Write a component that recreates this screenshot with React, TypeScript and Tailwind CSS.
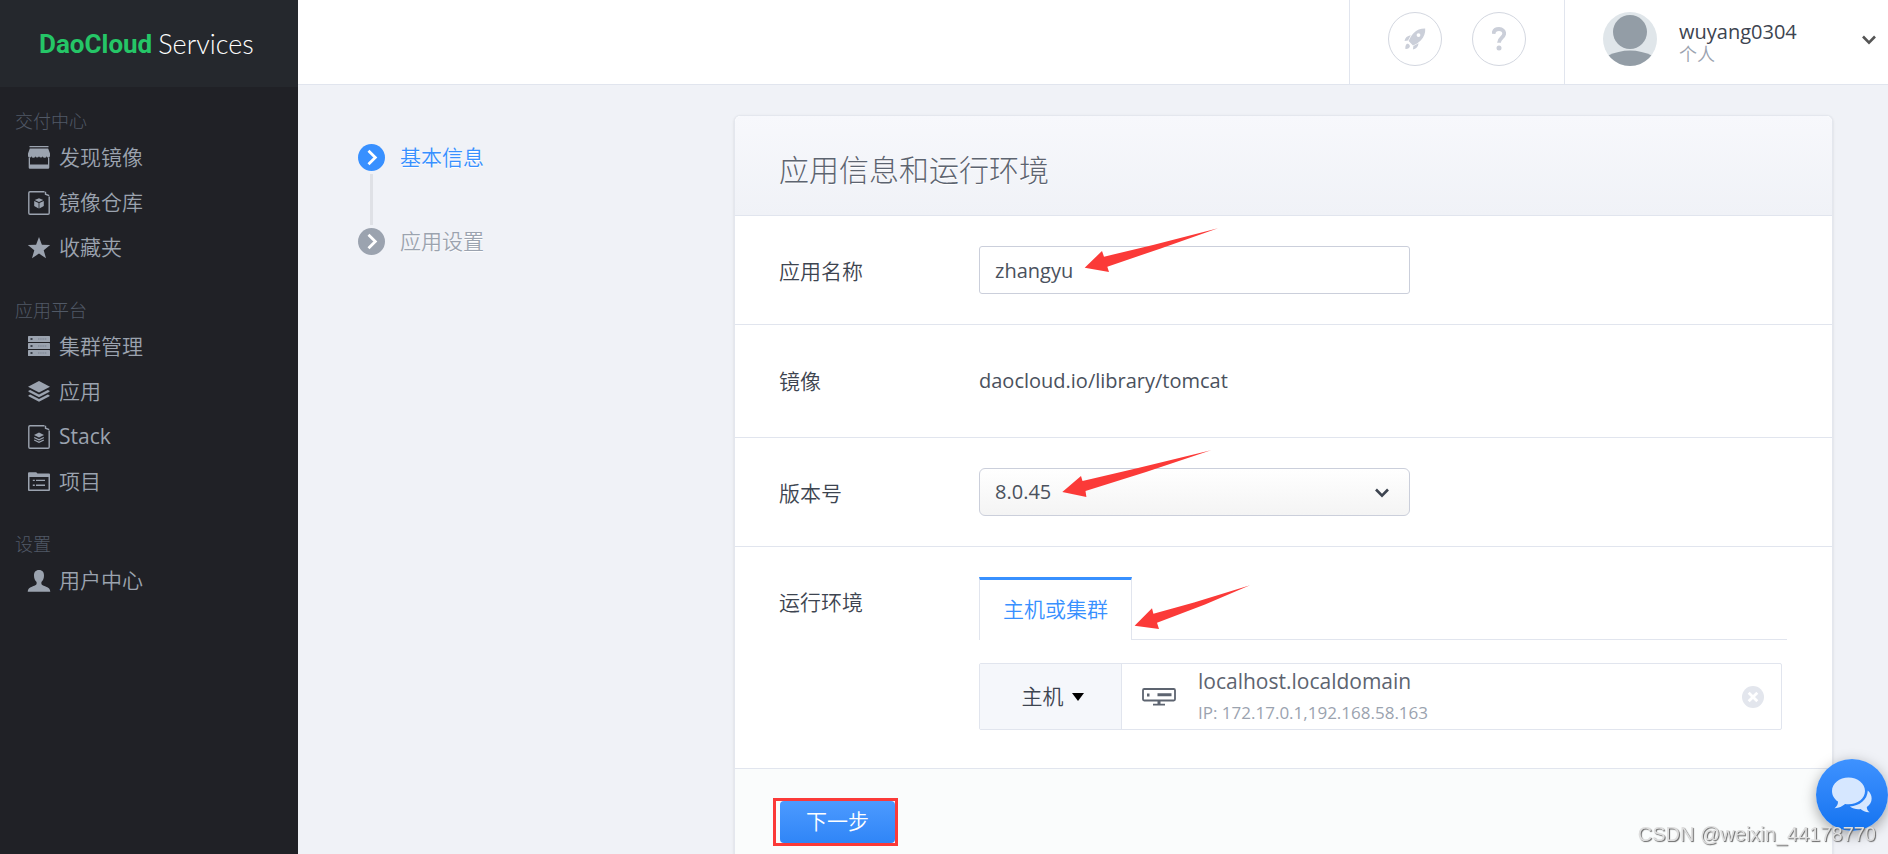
import { useState, type ReactNode } from "react";

function ChevronDown({ className }: { className?: string }) {
  return (
    <svg viewBox="0 0 14 10" className={className} fill="none" stroke="currentColor" strokeWidth="2.6" aria-hidden="true">
      <path d="M1 1.5 7 7.7 13 1.5" />
    </svg>
  );
}

function StoreIcon() {
  return (
    <svg viewBox="0 0 22 24" className="h-6 w-[22px]" fill="currentColor" aria-hidden="true">
      <path d="M1.500 0h19v1.300h-19zM1.800 2.600h18.400L22 7.600v1.700a1.800 1.800 0 0 1-3.600.6 1.800 1.800 0 0 1-3.600.3 2 2 0 0 1-3.800 0 2 2 0 0 1-3.800 0 1.800 1.800 0 0 1-3.600-.3A1.800 1.800 0 0 1 0 9.300V7.600z" />
      <path d="M.7 11.500H2v6.900h18v-6.900h1.300v10.100a1.200 1.200 0 0 1-1.200 1.200H1.900a1.200 1.200 0 0 1-1.200-1.200z" />
    </svg>
  );
}

function FileFrame({ children }: { children: ReactNode }) {
  return (
    <svg viewBox="0 0 22 24" className="h-6 w-[22px]" fill="currentColor" aria-hidden="true">
      <path d="M16.500.7H2A1.200 1.200 0 0 0 .8 1.900v20.200A1.200 1.200 0 0 0 2 23.300h18a1.200 1.200 0 0 0 1.200-1.200V5.500M17.500.7v2.500l3.700 1.500" fill="none" stroke="currentColor" strokeWidth="1.400" />
      {children}
    </svg>
  );
}

function RegistryIcon() {
  return (
    <FileFrame>
      <path d="m11 7.200 4.300 1.900L11 11 6.700 9.100zM6.200 10l4.400 1.900v5.700l-4.400-2.500zM15.800 10l-4.400 1.900v5.700l4.400-2.500z" />
    </FileFrame>
  );
}

function StackIcon() {
  return (
    <FileFrame>
      <path d="m11 7.500 5 2.500-5 2.500L6 10z" />
      <path d="m6.200 12.500 4.800 2.300 4.800-2.300M6.200 15l4.800 2.300 4.800-2.300" fill="none" stroke="currentColor" strokeWidth="1.300" />
    </FileFrame>
  );
}

function StarIcon() {
  return (
    <svg viewBox="0 0 24 24" className="h-6 w-6" fill="currentColor" aria-hidden="true">
      <path d="m12 1 2.900 7.800 8.300.3-6.500 5.100 2.300 8L12 17.600l-7 4.600 2.300-8L.8 9.100l8.300-.3z" />
    </svg>
  );
}

function ClusterIcon() {
  return (
    <svg viewBox="0 0 22 21" className="h-[21px] w-[22px]" aria-hidden="true">
      {[0, 7, 14].map((y) => (
        <g key={y}>
          <rect x="0" y={y} width="22" height="6" rx="0.6" fill="currentColor" />
          <rect x="2.500" y={y + 2} width="2" height="2" fill="#3b404a" />
          <path d={`M10 ${y + 3}h9`} stroke="#848c99" strokeWidth="1.600" strokeDasharray="1.500 .7" />
        </g>
      ))}
    </svg>
  );
}

function LayersIcon() {
  return (
    <svg viewBox="0 0 22 21" className="h-[21px] w-[22px]" fill="currentColor" aria-hidden="true">
      <path d="M11 0 22 5.700 11 11.500 0 5.700z" />
      <path d="m.5 9.800 1.700-.9L11 13.400l8.800-4.500 1.700.9v1L11 16.200.5 10.800zM.5 14.300l1.700-.9 8.800 4.500 8.800-4.500 1.700.9v1L11 20.800.5 15.300z" />
    </svg>
  );
}

function ProjectIcon() {
  return (
    <svg viewBox="0 0 22 19" className="h-[19px] w-[22px]" fill="currentColor" aria-hidden="true">
      <path d="M0 18V1.200Q0 .2 1 .2h7.200l1.300 1.300H21q1 0 1 1V18q0 1-1 1H1q-1 0-1-1zm1.500-.5h19V5H1.500z" fillRule="evenodd" />
      <path d="M4.800 7.800h2v1.300h-2zM8 7.800h9v1.300H8zM4.800 12.600h2v1.300h-2zM8 12.600h9v1.300H8z" />
    </svg>
  );
}

function UserIcon() {
  return (
    <svg viewBox="0 0 24 22" className="h-[22px] w-6" fill="currentColor" aria-hidden="true">
      <path d="M12 0c3.500 0 5 2.300 5 5.500 0 2.700-.9 5-2.600 6.500v2c.3 1.200 2.500 1.800 4.700 2.700 2.500 1 4.200 2.200 4.200 5.100H.7c0-2.900 1.700-4.100 4.200-5.100 2.200-.9 4.400-1.500 4.700-2.700v-2C7.900 10.500 7 8.200 7 5.500 7 2.300 8.500 0 12 0z" />
    </svg>
  );
}

const GROUPS = [
  {
    title: "交付中心",
    items: [
      { label: "发现镜像", weight: "font-[350]", icon: <StoreIcon /> },
      { label: "镜像仓库", weight: "font-[350]", icon: <RegistryIcon /> },
      { label: "收藏夹", weight: "font-[350]", icon: <StarIcon /> },
    ],
  },
  {
    title: "应用平台",
    items: [
      { label: "集群管理", weight: "font-[350]", icon: <ClusterIcon /> },
      { label: "应用", weight: "font-[350]", icon: <LayersIcon /> },
      { label: "Stack", weight: "font-normal", icon: <StackIcon /> },
      { label: "项目", weight: "font-[350]", icon: <ProjectIcon /> },
    ],
  },
  { title: "设置", items: [{ label: "用户中心", weight: "font-[350]", icon: <UserIcon /> }] },
];

function Sidebar() {
  return (
    <aside className="w-[298px] shrink-0 bg-[#202126]">
      <a href="#" className="flex h-[87px] items-center gap-1.5 bg-[#25282d] pl-[39px]">
        <span className="font-['Roboto',sans-serif] text-[26px] leading-8 font-bold text-[#25c667]">DaoCloud</span>
        <span className="font-['Lato',sans-serif] text-[27px] leading-8 font-light text-white">Services</span>
      </a>
      <nav className="flex flex-col gap-[26px] pt-5">
        {GROUPS.map((group) => (
          <section key={group.title}>
            <h2 className="pl-[15px] text-[18px] leading-7 font-light text-[#515966]">{group.title}</h2>
            <ul>
              {group.items.map((item) => (
                <li key={item.label}>
                  <a href="#" className={`flex h-[45px] items-center gap-2 pl-[27px] text-[#9ba3af] ${item.weight}`}>
                    <span className="flex w-6 justify-center">{item.icon}</span>
                    {item.label}
                  </a>
                </li>
              ))}
            </ul>
          </section>
        ))}
      </nav>
    </aside>
  );
}

function RocketIcon() {
  return (
    <svg viewBox="0 0 22 22" className="h-[22px] w-[22px]" fill="currentColor" aria-hidden="true">
      <path d="M21.200.5c.3 4.500-1 8.400-4.500 11.900-2.300 2.300-4.800 3.700-7.700 5L4.600 13C5.900 10 7.300 7.500 9.500 5.200 12.900 1.800 16.700.4 21.200.5zm-6.700 4.700a1.900 1.900 0 1 0 0 3.800 1.900 1.900 0 0 0 0-3.800z" fillRule="evenodd" />
      <path d="M6.800 7.200 4 12.400.5 13c.7-3.300 2.700-5.300 6.300-5.800zM14.600 15.300l-5.200 2.800-.5 3.500c3.300-.7 5.200-2.700 5.700-6.300zM2.900 15.800c1.400-.8 3.700 1.400 2.800 3.200-.8 1.400-2.400 2.200-4.300 1.900-.2-2 .1-4.100 1.500-5.100z" />
    </svg>
  );
}

function TopBar() {
  return (
    <header className="flex h-[85px] justify-end border-b border-[#e1e5ee] bg-white">
      <div className="flex gap-[30px] border-x border-[#e1e5ee] pt-3 pr-[38px] pl-[38px]">
        <button type="button" aria-label="快速入门" className="flex h-[54px] w-[54px] items-center justify-center rounded-full border border-[#d3d7e0] text-[#cbcfd9]">
          <RocketIcon />
        </button>
        <button type="button" aria-label="帮助" className="flex h-[54px] w-[54px] items-center justify-center rounded-full border border-[#d3d7e0] text-[#cbcfd9]">
          <svg viewBox="0 0 14 24" className="h-6 w-3.5" fill="none" stroke="currentColor" aria-hidden="true">
            <path d="M1.500 6.800C1.700 3.700 3.900 2 7 2c3.300 0 5.200 1.900 5.200 4.600C12.200 10.500 7 10.800 7 15.700" strokeWidth="3.800" />
            <circle cx="7" cy="21" r="2.500" fill="currentColor" stroke="none" />
          </svg>
        </button>
      </div>
      <button type="button" className="flex w-[323px] items-start pt-3 pr-3 pl-[38px] text-left">
        <svg viewBox="0 0 54 54" className="h-[54px] w-[54px] rounded-full" aria-hidden="true">
          <rect width="54" height="54" fill="#e0e6ea" />
          <circle cx="27" cy="20" r="17" fill="#939da6" />
          <path d="M4 44q23-11 46 0v10H4z" fill="#939da6" />
        </svg>
        <span className="flex flex-1 flex-col pl-[22px]">
          <span className="pt-2 text-[20px] leading-6 text-[#3d4450]">wuyang0304</span>
          <span className="text-[18px] leading-5 font-[350] text-[#9ba3af]">个人</span>
        </span>
        <ChevronDown className="mt-[23px] h-2.5 w-3.5 text-[#555]" />
      </button>
    </header>
  );
}

function StepMark() {
  return (
    <svg viewBox="0 0 27 27" className="h-[27px] w-[27px]" aria-hidden="true">
      <circle cx="13.500" cy="13.500" r="13.500" fill="currentColor" />
      <path d="m10.500 6.800 6.800 6.700-6.800 6.700" fill="none" stroke="#fff" strokeWidth="2.800" />
    </svg>
  );
}

function Steps() {
  return (
    <ol className="w-[376px] shrink-0 pt-[29px] font-[350] [text-shadow:0_1px_0_#fff]">
      <li className="flex items-center gap-[15px] text-[#3890ff]" aria-current="step">
        <StepMark />
        <span className="leading-[27px]">基本信息</span>
      </li>
      <li aria-hidden="true" className="my-[3px] ml-3 h-[51px] w-[3px] bg-[#dfe1e6]" />
      <li className="flex items-center gap-[15px] text-[#9ba3af]">
        <StepMark />
        <span className="leading-[27px]">应用设置</span>
      </li>
    </ol>
  );
}

function Arrow({ className, viewBox, d }: { className: string; viewBox: string; d: string }) {
  return (
    <svg viewBox={viewBox} className={`pointer-events-none absolute ${className}`} aria-hidden="true">
      <path d={d} fill="#fb3a38" />
    </svg>
  );
}

function Label({ htmlFor, children }: { htmlFor?: string; children: ReactNode }) {
  return (
    <label htmlFor={htmlFor} className="h-12 w-[200px] shrink-0 leading-[50px] font-[350] text-[#3d4450]">
      {children}
    </label>
  );
}

function ServerIcon() {
  return (
    <svg viewBox="0 0 34 18" className="h-[18px] w-[34px]" aria-hidden="true">
      <rect x="1" y="1" width="32" height="11.500" rx="1.200" fill="none" stroke="#5d6470" strokeWidth="1.800" />
      <path d="M5 5.500h2.500v3H5zM15.500 5.200h14v3h-14zM15.500 12.500h3V16h-3zM11 15.700h12V17.500H11z" fill="#5d6470" />
    </svg>
  );
}

export default function App() {
  const [name, setName] = useState("zhangyu");
  return (
    <div className="flex min-h-screen bg-[#f0f2f7] font-['Open_Sans','Noto_Sans_CJK_SC',sans-serif] text-[21px]">
      <Sidebar />
      <div className="flex min-w-0 flex-1 flex-col">
        <TopBar />
        <main className="flex flex-1 pt-[30px] pr-[55px] pl-[60px]">
          <Steps />
          <form className="flex min-w-0 flex-1 flex-col rounded-t-md border border-b-0 border-[#e4e7ee] bg-white shadow-sm">
            <h1 className="rounded-t-md border-b border-[#e1e5ee] bg-linear-to-b from-[#f7f8fc] to-[#f0f2f7] px-11 pt-2 text-[30px] leading-[91px] font-light text-[#5d6470] [text-shadow:0_1px_0_#fff]">
              应用信息和运行环境
            </h1>
            <div className="flex border-b border-[#e1e5ee] px-11 py-[30px]">
              <Label htmlFor="app-name">应用名称</Label>
              <div className="relative w-[431px]">
                <input
                  id="app-name"
                  value={name}
                  onChange={(e) => setName(e.target.value)}
                  className="block h-12 w-full rounded-[3px] border border-[#cbcfdb] bg-white px-[15px] text-[20px] text-[#4a515d]"
                />
                <Arrow
                  className="-top-5 left-[104px] h-12 w-[138px]"
                  viewBox="1083 226 138 48"
                  d="M1084.700 267.700 1102 251 1104 256.700 1153 245 1218 228.300 1160 248.700 1107.300 266.700 1109 272z"
                />
              </div>
            </div>
            <div className="flex border-b border-[#e1e5ee] px-11 py-[31px]">
              <Label>镜像</Label>
              <span className="text-[20px] leading-[50px] text-[#4a515d]">daocloud.io/library/tomcat</span>
            </div>
            <div className="flex border-b border-[#e1e5ee] px-11 py-[30px]">
              <Label htmlFor="version">版本号</Label>
              <div className="relative w-[431px]">
                <select
                  id="version"
                  className="block h-12 w-full appearance-none rounded-md border border-[#cbcfdb] bg-linear-to-b from-white to-[#f4f4f4] px-[15px] text-[20px] text-[#4a515d]"
                >
                  <option>8.0.45</option>
                </select>
                <ChevronDown className="pointer-events-none absolute top-5 right-[21px] h-2.5 w-3.5 text-[#3d4450]" />
                <Arrow
                  className="-top-5 left-[81px] h-[50px] w-[154px]"
                  viewBox="1060 448 154 50"
                  d="M1062.300 492 1081 476 1082.500 481 1138 468 1211 450.300 1146 472 1085.500 491 1086.400 497z"
                />
              </div>
            </div>
            <div className="flex border-b border-[#e1e5ee] pt-[30px] pr-[45px] pb-[38px] pl-11">
              <Label>运行环境</Label>
              <div className="relative min-w-0 flex-1">
                <div role="tablist" className="flex">
                  <button
                    type="button"
                    role="tab"
                    aria-selected="true"
                    className="h-[63px] border-x border-t-3 border-x-[#e1e5ee] border-t-[#3890ff] px-[23px] font-[350] text-[#3890ff]"
                  >
                    主机或集群
                  </button>
                  <span className="flex-1 border-b border-[#e1e5ee]" />
                </div>
                <div className="mt-[23px] mr-[5px] flex h-[67px] rounded-[2px] border border-[#e1e5ee]">
                  <button type="button" className="flex w-[142px] items-center justify-center gap-2 border-r border-[#e1e5ee] bg-[#f5f7fb] pl-1 font-[350] text-[#3d4450]">
                    主机
                    <svg viewBox="0 0 12 8" className="h-2 w-3" aria-hidden="true">
                      <path d="M0 0h12L6 8z" fill="#000" />
                    </svg>
                  </button>
                  <div className="flex flex-1 items-center pr-[17px] pl-5">
                    <ServerIcon />
                    <div className="flex-1 pl-[22px]">
                      <p className="text-[21px] leading-8 text-[#5d6470]">localhost.localdomain</p>
                      <p className="text-[17px] leading-8 text-[#9ba3af]">IP: 172.17.0.1,192.168.58.163</p>
                    </div>
                    <button type="button" aria-label="移除">
                      <svg viewBox="0 0 22 22" className="h-[22px] w-[22px]" aria-hidden="true">
                        <circle cx="11" cy="11" r="11" fill="#e3e6ed" />
                        <path d="m6.700 6.700 8.600 8.600m0-8.600-8.600 8.600" stroke="#fff" strokeWidth="2.800" />
                      </svg>
                    </button>
                  </div>
                </div>
                <Arrow
                  className="top-[6px] left-[154px] h-[48px] w-[120px]"
                  viewBox="1133 583 120 48"
                  d="M1134.600 625.700 1152 608.300 1153.400 613.700 1194 602.500 1250 585.300 1205 604.500 1157 622.700 1159 629z"
                />
              </div>
            </div>
            <div className="flex-1 bg-[#fafcfc] pt-[29px] pl-[38px]">
              <div className="flex w-fit border-3 border-[#fb3a38] pl-1">
                <button
                  type="submit"
                  className="h-[42px] rounded-sm bg-linear-to-b from-[#4c9aff] to-[#2f85f7] px-[26px] font-[350] text-white"
                >
                  下一步
                </button>
              </div>
            </div>
          </form>
        </main>
      </div>
      <button
        type="button"
        aria-label="在线客服"
        className="fixed right-0 bottom-[23px] flex h-[72px] w-[72px] items-center justify-center rounded-full bg-linear-to-b from-[#3e92ff] to-[#1273f0] shadow-[0_4px_14px_rgba(0,0,0,0.35)]"
      >
        <svg viewBox="0 0 40 36" className="h-9 w-10" fill="#d6e7ff" aria-hidden="true">
          <path d="M16.500.5C25.600.5 33 6.500 33 14s-7.400 13.300-16.500 13.300c-1.200 0-2.300-.1-3.400-.3-2.700 2.200-6.400 4.300-10.600 4.200 2.400-1.700 3.600-4 3.500-6.600C2.400 22.200 0 18.400 0 14 0 6.500 7.400.5 16.500.5z" />
          <path d="M35.800 13.500c5.600 5 4.900 12.400-1 16.400 0 2.100 1 3.900 2.800 5.300-3.700.3-6.700-1.300-9-3.200-3.900.6-7.500-.3-10.700-2.600 9.500-.4 17.500-6.500 17.900-15.900z" />
        </svg>
      </button>
      <p className="pointer-events-none fixed right-3 bottom-2 font-['Liberation_Sans',sans-serif] text-[20px] leading-6 text-[#dedede] [text-shadow:1px_1px_1px_#666]">
        CSDN @weixin_44178770
      </p>
    </div>
  );
}
